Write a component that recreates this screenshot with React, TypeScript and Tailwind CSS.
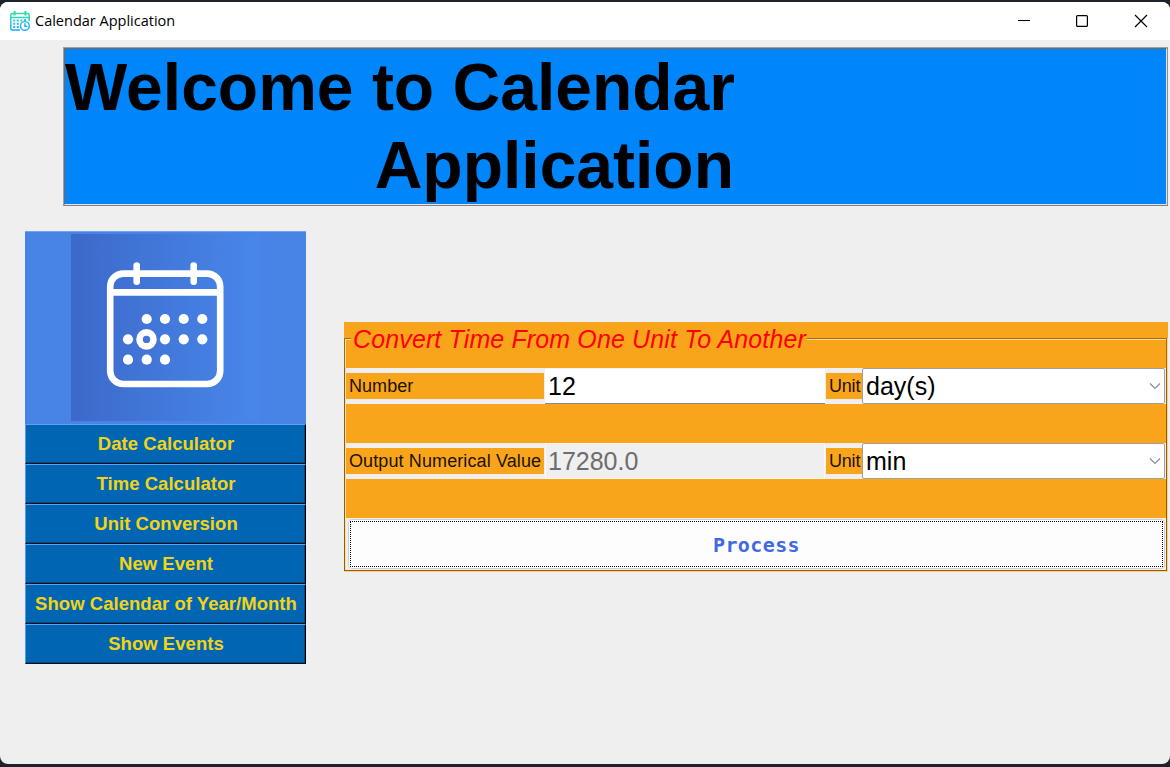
const menu = [
  'Date Calculator',
  'Time Calculator',
  'Unit Conversion',
  'New Event',
  'Show Calendar of Year/Month',
  'Show Events',
];

function AppIcon() {
  return (
    <svg width="20" height="20" viewBox="0 0 20 20" fill="none" stroke="url(#iconGradient)" strokeWidth="1.5">
      <defs>
        <linearGradient id="iconGradient" gradientUnits="userSpaceOnUse" x1="0" y1="0" x2="0" y2="20">
          <stop offset="0" stopColor="#35e28c" />
          <stop offset="0.45" stopColor="#2bcfd0" />
          <stop offset="1" stopColor="#1ba4ff" />
        </linearGradient>
      </defs>
      <path d="M10 19H2.4Q.8 19 .8 17.4V3.9Q.8 2.4 2.4 2.4H17.6Q19.2 2.4 19.2 3.9V10M.8 6.4H19.2" />
      <path d="M4.6 0V4.4M15.4 0V4.4" strokeWidth="2" />
      <path d="M3.2 9.5h2M6.8 9.5h2M10.4 9.5h2M14 9h2M3.2 12.7h2M6.8 12.7h2M3.2 15.9h2M6.8 15.9h2" strokeWidth="2" />
      <circle cx="14.9" cy="14.9" r="4.4" />
      <path d="M14.9 12.2V15.2H17.3" />
    </svg>
  );
}

const dots = [
  [146.7, 319], [165, 319], [183.7, 319], [202.3, 319],
  [128, 339.3], [165, 339.3], [183.7, 339.3], [202.3, 339.3],
  [128, 359.7], [146.7, 359.7], [165, 359.7],
];

function CalendarPicture() {
  return (
    <svg className="block" width="281" height="193" viewBox="25 231 281 193">
      <defs>
        <linearGradient id="pictureGradient">
          <stop offset="0" stopColor="#3c69ca" />
          <stop offset="1" stopColor="#4887ea" />
        </linearGradient>
      </defs>
      <rect x="25" y="231" width="281" height="193" fill="#4884e6" />
      <rect x="25" y="231" width="281" height="1" fill="#73a2ef" />
      <rect x="71" y="234" width="188" height="187" fill="url(#pictureGradient)" />
      <g fill="none" stroke="#fff" strokeWidth="6.6">
        <rect x="110.2" y="273.6" width="110" height="110.4" rx="13" />
        <path d="M110 292.4H220" />
        <path d="M136.7 265.6V281.8M193.7 265.6V281.8" strokeLinecap="round" />
        <circle cx="146.5" cy="339.4" r="7" />
      </g>
      {dots.map(([x, y]) => (
        <circle key={`${x}-${y}`} cx={x} cy={y} r="5.1" fill="#fff" />
      ))}
    </svg>
  );
}

function Label({ text, className }: { text: string; className: string }) {
  return (
    <div className={`my-[5px] flex h-[26px] shrink-0 items-center overflow-hidden bg-[#f9a51b] pl-[3px] text-lg leading-none whitespace-nowrap text-[#1c1200] ${className}`}>
      {text}
    </div>
  );
}

function Combo({ value }: { value: string }) {
  return (
    <div className="flex h-9 flex-1 items-center justify-between rounded-[2px] border border-[#a0a0a0] bg-white pr-[3px] pl-[3px] text-[25px] leading-none text-black">
      <span>{value}</span>
      <svg width="12" height="8" viewBox="0 0 12 8" fill="none" stroke="#8c8c8c" strokeWidth="1.2">
        <path d="M1 1.5L6 6.5L11 1.5" />
      </svg>
    </div>
  );
}

export default function App() {
  return (
    <div className="flex h-[767px] w-[1170px] flex-col overflow-hidden bg-[#20222b] pt-0.5 pb-[3px] font-['Liberation_Sans',sans-serif]">
      <div className="flex h-[762px] flex-col overflow-hidden rounded-[8px] bg-[#efefef]">
        <header className="flex h-[38px] shrink-0 items-center bg-white pl-2.5">
          <AppIcon />
          <span className="ml-[5px] font-['Open_Sans',sans-serif] text-[14.5px] text-black">Calendar Application</span>
          <svg className="ml-auto" width="160" height="38" viewBox="1010 2 160 38" fill="none" stroke="#000" strokeWidth="1.2">
            <path d="M1018 20.5H1030" />
            <rect x="1076.6" y="15.6" width="10.8" height="10.8" rx="1" />
            <path d="M1135 15L1147 27M1147 15L1135 27" />
          </svg>
        </header>

        <div className="mt-[7px] ml-[63px] h-[159px] w-[1105px] shrink-0 border border-t-[#a0a0a0] border-r-[#909090] border-b-[#808080] border-l-[#a0a0a0]">
          <div className="h-full border border-t-[#696969] border-r-[#e3e3e3] border-b-[#e3e3e3] border-l-[#696969] bg-[#0085fa]">
            <h1 className="-mt-px w-[669px] text-right text-[66px] leading-[78px] font-bold whitespace-nowrap text-black">
              Welcome to Calendar
              <br />
              Application
            </h1>
          </div>
        </div>

        <main className="flex pt-[25px] pl-[25px]">
          <nav className="w-[281px] shrink-0">
            <CalendarPicture />
            {menu.map((item) => (
              <button
                key={item}
                className="block h-10 w-full border border-t-[#649df0] border-r-black border-b-[#06121f] border-l-[#5b98ee]"
              >
                <span className="flex h-full items-center justify-center border-r border-b border-[#004a86] bg-[#0066b4] pt-0.5 pl-0.5 text-[18.5px] leading-none font-bold tracking-[0.04px] whitespace-nowrap text-[#f5d312]">
                  {item}
                </span>
              </button>
            ))}
          </nav>

          <section className="mt-[91px] ml-[38px] flex h-[250px] w-[824px] flex-col bg-[#f9a51b]">
            <div className="flex h-4 shrink-0 items-start pl-[9px]">
              <h2 className="pt-1 text-[25px] leading-[26px] tracking-[0.13px] whitespace-nowrap text-[#ff0000] italic">Convert Time From One Unit To Another</h2>
            </div>
            <div className="flex h-[234px] flex-col border-r border-b border-[#fbd37d]">
              <div className="flex h-[30px] shrink-0">
                <div className="h-full w-[7px] border-t border-l border-[#a66c0e]">
                  <div className="h-full border-t border-l border-[#fde0a0]" />
                </div>
                <div className="w-[456px]" />
                <div className="h-full flex-1 border-t border-r border-[#a66c0e]">
                  <div className="h-full border-t border-[#fde0a0]" />
                </div>
              </div>
              <div className="flex flex-1 flex-col border-r border-b border-l border-[#8f5d0d]">
                <div className="flex flex-1 flex-col border-l border-[#fde0a0]">
                  <div className="flex h-9 shrink-0 bg-[#efefef] pr-px">
                    <Label text="Number" className="w-[198px] tracking-[0.05px]" />
                    <div className="ml-px flex h-9 w-[280px] items-center border-t border-b border-t-[#f4f4f4] border-b-[#8a8a8a] bg-white pl-[3px] text-[25px] leading-none text-black">12</div>
                    <div className="w-px" />
                    <Label text="Unit" className="w-[36px] tracking-[-0.2px]" />
                    <Combo value="day(s)" />
                  </div>
                  <div className="h-[39px] shrink-0" />
                  <div className="flex h-9 shrink-0 bg-[#efefef] pr-px">
                    <Label text="Output Numerical Value" className="w-[198px] tracking-[0.11px]" />
                    <div className="ml-px flex h-9 w-[280px] items-center border border-[#f9f9f9] pl-0.5 text-[25px] leading-none text-[#6d6d6d]">17280.0</div>
                    <div className="w-px" />
                    <Label text="Unit" className="w-[36px] tracking-[-0.2px]" />
                    <Combo value="min" />
                  </div>
                  <div className="h-[39px] shrink-0" />
                  <div className="flex-1 bg-[#efefef] p-px pl-0.5">
                    <button className="block h-full w-full rounded-[4px] border border-[#d0d0d0] bg-[#fdfdfd] p-px">
                      <span className="flex h-full items-center justify-center border border-dotted border-black pt-0.5 font-['DejaVu_Sans_Mono',monospace] text-[20px] leading-none font-bold tracking-[0.4px] text-[#4169e1]">
                        Process
                      </span>
                    </button>
                  </div>
                </div>
              </div>
            </div>
          </section>
        </main>
      </div>
    </div>
  );
}
